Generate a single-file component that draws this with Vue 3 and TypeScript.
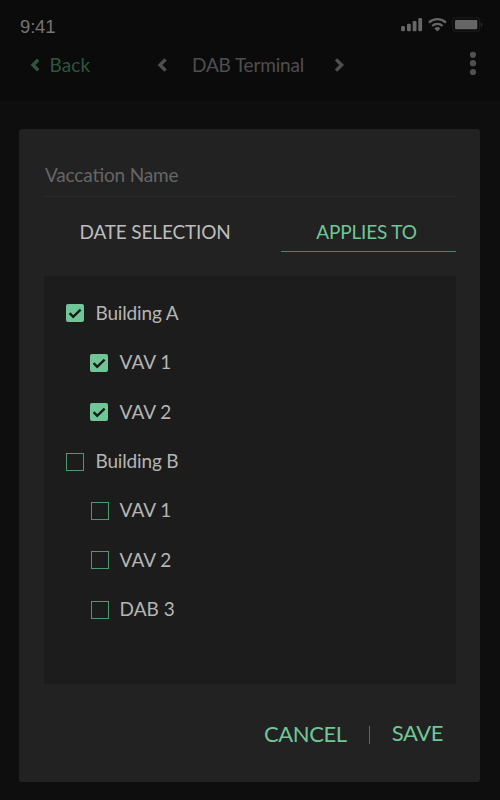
<script setup lang="ts">
interface TreeItem {
  id: string
  label: string
  checked: boolean
  child: boolean
}

const items: TreeItem[] = [
  { id: 'a', label: 'Building A', checked: true, child: false },
  { id: 'a1', label: 'VAV 1', checked: true, child: true },
  { id: 'a2', label: 'VAV 2', checked: true, child: true },
  { id: 'b', label: 'Building B', checked: false, child: false },
  { id: 'b1', label: 'VAV 1', checked: false, child: true },
  { id: 'b2', label: 'VAV 2', checked: false, child: true },
  { id: 'b3', label: 'DAB 3', checked: false, child: true },
]
</script>

<template>
  <div class="screen">
    <header class="header">
      <div class="status">
        <span class="time">9:41</span>
        <svg class="status-icons" width="84" height="18" viewBox="0 0 84 18">
          <g fill="#666">
            <rect x="1.2" y="10" width="3.7" height="5.2" rx="1.2" />
            <rect x="7" y="7.8" width="3.8" height="7.4" rx="1.2" />
            <rect x="12.7" y="5" width="3.8" height="10.2" rx="1.2" />
            <rect x="18.3" y="2" width="3.8" height="13.2" rx="1.2" />
            <rect x="55" y="4" width="22.3" height="9.2" rx="1" />
          </g>
          <g fill="none" stroke="#666" stroke-width="2.3">
            <path d="M28.9 6.6a12.3 12.3 0 0 1 17 0" />
            <path d="M32.2 10a7.6 7.6 0 0 1 10.4 0" />
          </g>
          <path d="M34.4 12.4a4.4 4.4 0 0 1 6 0l-3 3z" fill="#666" />
          <rect x="52.8" y="2" width="26.8" height="13.2" rx="2.5" fill="none" stroke="#1c1c1c" stroke-width="1.1" />
          <path d="M80.8 6.3q1.6.7 1.6 2.3t-1.6 2.3z" fill="#2b2b2b" />
        </svg>
      </div>
      <nav class="nav">
        <a class="back">
          <svg width="10" height="14" viewBox="0 0 10 14"><path d="M8.2 1.8 3 7l5.2 5.2" /></svg>
          <span>Back</span>
        </a>
        <svg class="chev prev" width="12" height="16" viewBox="0 0 12 16"><path d="M9.6 2.4 4 8l5.6 5.6" /></svg>
        <span class="title">DAB Terminal</span>
        <svg class="chev next" width="12" height="16" viewBox="0 0 12 16"><path d="m3 2.4 5.6 5.6L3 13.6" /></svg>
        <svg class="more" width="8" height="26" viewBox="0 0 8 26">
          <circle cx="4" cy="4.8" r="3.1" /><circle cx="4" cy="13.2" r="3.1" /><circle cx="4" cy="22" r="3.1" />
        </svg>
      </nav>
    </header>

    <main class="card">
      <div class="field">Vaccation Name</div>
      <div class="tabs">
        <div class="tab date"><span>DATE SELECTION</span></div>
        <div class="tab active"><span>APPLIES TO</span></div>
      </div>
      <ul class="list">
        <li v-for="item in items" :key="item.id" :class="['row', { child: item.child, on: item.checked }]">
          <svg v-if="item.checked" class="check" width="18" height="18" viewBox="0 0 18 18">
            <rect width="18" height="18" rx="2" fill="#71c698" />
            <path d="m3.6 9.2 3.6 3.7 7.4-7.2" fill="none" stroke="#171b19" stroke-width="2.4" />
          </svg>
          <span v-else class="check empty"></span>
          <span class="label">{{ item.label }}</span>
        </li>
      </ul>
      <div class="actions">
        <span class="cancel">CANCEL</span>
        <i class="divider"></i>
        <span class="save">SAVE</span>
      </div>
    </main>
  </div>
</template>

<style>
body {
  margin: 0;
  background: #0e0e0e;
}
</style>

<style scoped>
.screen {
  width: 500px;
  height: 800px;
  overflow: hidden;
  background: #0e0e0e;
  font-family: Lato, sans-serif;
  font-size: 19px;
  line-height: 24px;
  letter-spacing: -0.16px;
  font-feature-settings: "liga" 1;
  white-space: nowrap;
}
.header {
  height: 101px;
  margin-bottom: 28px;
  background: #0b0b0b;
}
.status {
  display: flex;
  justify-content: space-between;
  height: 44px;
  padding: 16px 16px 0 20px;
  box-sizing: border-box;
}
.time {
  font-family: "Liberation Sans", Arial, sans-serif;
  font-size: 18.5px;
  color: #757575;
  line-height: 22px;
}
.nav {
  display: flex;
  align-items: center;
  height: 42px;
  padding: 0 23px 0 30px;
  color: #4e4e4e;
}
.back {
  display: flex;
  align-items: center;
  width: 126px;
  gap: 9.5px;
  letter-spacing: 0.1px;
  color: #2c563f;
}
.back span,
.title {
  padding-bottom: 1px;
}
.nav svg path {
  fill: none;
  stroke: currentColor;
  stroke-width: 3.4;
}
.prev {
  margin-right: 24px;
}
.title {
  width: 112px;
}
.next {
  margin-left: 28.5px;
}
.more {
  margin-left: auto;
  margin-top: -4px;
  fill: #505050;
}
.card {
  width: 461px;
  height: 652.5px;
  margin-left: 19.4px;
  padding: 24px 24.4px 0 24.6px;
  box-sizing: border-box;
  border-radius: 3px;
  background: #222;
}
.field {
  height: 44px;
  padding-left: 1px;
  box-sizing: border-box;
  border-bottom: 1px solid #2b2b2b;
  line-height: 43px;
  color: #666;
}
.tabs {
  display: flex;
  justify-content: space-between;
  height: 55px;
}
.tab {
  height: 55px;
  padding-top: 23px;
  box-sizing: border-box;
  text-align: center;
  color: #bdbdbd;
}
.date {
  padding-left: 35.5px;
}
.active {
  width: 175px;
  padding-right: 4px;
  border-bottom: 1px solid #4c8468;
  color: #71c698;
}
.list {
  height: 408px;
  margin: 24px 0 0;
  padding: 12.7px 0 0 22px;
  box-sizing: border-box;
  border-radius: 2px;
  background: #1c1c1c;
  list-style: none;
}
.row {
  display: flex;
  align-items: center;
  gap: 11.5px;
  height: 49.4px;
  color: #b5b5b5;
}
.label {
  padding-bottom: 1px;
}
.child {
  padding-left: 24.6px;
  gap: 11px;
  letter-spacing: 0;
}
.child.on {
  padding-left: 24.2px;
  gap: 11.4px;
}
.check {
  flex: none;
  width: 18px;
  height: 18px;
  box-sizing: border-box;
}
.empty {
  border: 1px solid #4c9970;
}
.actions {
  display: flex;
  align-items: center;
  justify-content: flex-end;
  height: 99px;
  padding-right: 13px;
  font-size: 22px;
  letter-spacing: -0.4px;
  color: #71c698;
}
.save {
  padding-bottom: 1.5px;
}
.divider {
  width: 1px;
  height: 18px;
  margin: 2px 21.5px 0 22.5px;
  background: #666;
}
</style>
